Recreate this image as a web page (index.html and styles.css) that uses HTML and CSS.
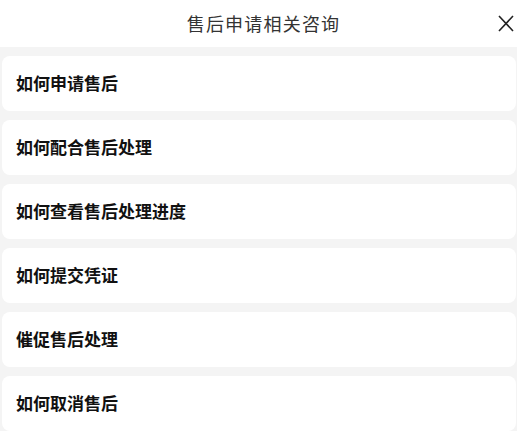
FILE: index.html
```html
<!DOCTYPE html>
<html lang="zh">
<head>
<meta charset="utf-8">
<link rel="stylesheet" href="styles.css">
</head>
<body>
<div class="sheet">
  <header class="head">
    <h1 class="title">售后申请相关咨询</h1>
    <button class="close" aria-label="关闭">
      <svg width="16" height="17" viewBox="0 0 16 17"><path d="M1 1 L15 16 M15 1 L1 16" stroke="#222" stroke-width="1.6" fill="none"/></svg>
    </button>
  </header>
  <ul class="list">
    <li class="item">如何申请售后</li>
    <li class="item">如何配合售后处理</li>
    <li class="item">如何查看售后处理进度</li>
    <li class="item">如何提交凭证</li>
    <li class="item">催促售后处理</li>
    <li class="item">如何取消售后</li>
  </ul>
</div>
</body>
</html>
```
FILE: styles.css
```css
html, body { margin: 0; padding: 0; }
body {
  width: 517px; height: 431px; overflow: hidden;
  background: #f4f4f4;
  font-family: "Noto Sans CJK SC", "Noto Sans", sans-serif;
}
.sheet { display: flex; flex-direction: column; }
.head {
  height: 47px; background: #fff;
  display: flex; align-items: center; justify-content: center;
  position: relative;
}
.title {
  margin: 0 0 2px 10px; font-size: 18px; font-weight: 400; color: #333;
  letter-spacing: 1.2px; line-height: 1;
}
.close {
  position: absolute; right: 3px; top: 15px;
  border: 0; background: none; padding: 0; width: 16px; height: 17px;
  display: block;
}
.close svg { display: block; }
.list {
  list-style: none; margin: 0; padding: 9px 1px 0 2px;
  display: flex; flex-direction: column; gap: 9px;
}
.item {
  height: 55px; background: #fff; border-radius: 8px;
  display: flex; align-items: center;
  padding: 0 0 3px 14px; box-sizing: border-box;
  font-size: 17px; font-weight: 700; color: #111;
}
```
